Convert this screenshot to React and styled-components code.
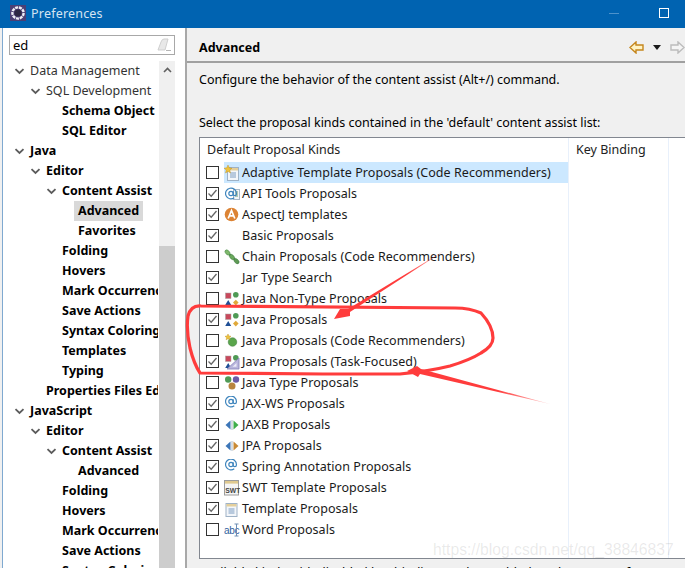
import React from 'react';
import styled, { createGlobalStyle } from 'styled-components';

const GlobalStyle = createGlobalStyle`
  html, body {
    margin: 0;
    padding: 0;
    overflow: hidden;
    background: #f0f0f0;
  }
`

const Window = styled.div`
  position: relative;
  width: 685px;
  height: 568px;
  overflow: hidden;
  display: flex;
  flex-direction: column;
  background: #f0f0f0;
  color: #000;
  font-family: "Noto Sans", "Open Sans", sans-serif;
  font-size: 12.5px;
`

const TitleBar = styled.div`
  height: 28px;
  flex: none;
  box-sizing: border-box;
  display: flex;
  align-items: center;
  background: #0063b1;
  color: #d5e4f2;
  padding: 0 0 2px 10px;
  gap: 5px;
`

const TitleText = styled.span`
  flex: 1;
  font-size: 12.5px;
  letter-spacing: 0.2px;
`

const MinButton = styled.div`
  width: 10px;
  height: 1px;
  background: #4d92cb;
  margin-right: 35px;
`

const MaxButton = styled.div`
  width: 8px;
  height: 8px;
  border: 1px solid #fff;
  margin-right: 16px;
`

const Body = styled.div`
  flex: 1;
  min-height: 0;
  display: flex;
`

const Sidebar = styled.div`
  width: 183px;
  flex: none;
  margin-left: 2px;
  padding-top: 7px;
  box-sizing: border-box;
  background: #fff;
  border-left: 1px solid #7fa9d0;
  display: flex;
  flex-direction: column;
`

const Search = styled.div`
  width: 166px;
  height: 20px;
  margin-left: 6px;
  box-sizing: border-box;
  border: 1px solid #a8a8a8;
  display: flex;
  align-items: center;
  justify-content: space-between;
  padding: 0 2px 0 3px;
  font-size: 13px;
`

const TreeArea = styled.div`
  flex: 1;
  min-height: 0;
  margin-top: 6px;
  display: flex;
`

const Tree = styled.div`
  width: 155px;
  margin-right: 1px;
  overflow: hidden;
  flex: none;
`

const TreeRow = styled.div`
  height: 20px;
  display: flex;
  align-items: center;
  white-space: nowrap;
  padding-left: ${p => 11 + p.$level * 16}px;
`

const Toggle = styled.span`
  width: 16px;
  flex: none;
  display: flex;
  align-items: center;
`

const TreeLabel = styled.span`
  font-weight: ${p => (p.$bold ? 700 : 400)};
  color: ${p => (p.$bold ? '#000' : '#333')};
  height: 20px;
  line-height: 20px;
  padding: 0 4px;
  margin-left: -4px;
  background: ${p => (p.$selected ? '#d9d9d9' : 'transparent')};
`

const Scrollbar = styled.div`
  width: 16px;
  flex: none;
  display: flex;
  flex-direction: column;
  background: #f0f0f0;
`

const ScrollArrow = styled.div`
  height: 17px;
  display: flex;
  align-items: center;
  justify-content: center;
`

const ScrollThumb = styled.div`
  margin-top: 168px;
  flex: 1;
  background: #cdcdcd;
`

const Sash = styled.div`
  width: 2px;
  flex: none;
  background: #a8a8a8;
`

const Main = styled.div`
  flex: 1;
  min-width: 0;
  display: flex;
  flex-direction: column;
`

const Header = styled.div`
  height: 35px;
  flex: none;
  box-sizing: border-box;
  border-bottom: 2px solid #a0a0a0;
  display: flex;
  align-items: center;
  justify-content: space-between;
  padding: 5px 0 0 12px;
`

const Title = styled.h1`
  margin: 0;
  font-size: 12.5px;
  font-weight: 700;
`

const Nav = styled.div`
  display: flex;
  align-items: center;
  gap: 9px;
`

const Paragraph = styled.div`
  height: 20px;
  line-height: 20px;
  white-space: nowrap;
  margin-left: 12px;
  margin-top: ${p => p.$top}px;
  flex: none;
  letter-spacing: -0.02px;
`

const Table = styled.div`
  height: 422px;
  flex: none;
  margin: 4px 0 0 12px;
  box-sizing: border-box;
  border: 1px solid #828790;
  border-right: 0;
  background: #fff;
  display: grid;
  grid-template-columns: 369px 100px 1fr;
`

const Column = styled.div`
  border-right: 1px solid #e8f0fb;
`

const ColumnHead = styled.div`
  height: 24px;
  padding: 2px 0 0 7px;
  box-sizing: border-box;
  line-height: 20px;
  color: #222;
`

const Row = styled.div`
  height: 21px;
  display: flex;
  align-items: center;
  padding-left: 6px;
  white-space: nowrap;
`

const Box = styled.span`
  width: 13px;
  height: 13px;
  box-sizing: border-box;
  border: 1px solid #333;
  background: #fff;
  flex: none;
  display: flex;
  align-items: center;
  justify-content: center;
`

const Cell = styled.div`
  flex: 1;
  height: 21px;
  margin-left: 5px;
  display: flex;
  align-items: center;
  background: ${p => (p.$selected ? '#cce8ff' : 'transparent')};
`

const IconSlot = styled.span`
  width: 16px;
  height: 16px;
  margin-right: 2px;
  flex: none;
  display: flex;
`

const RowLabel = styled.span`
  color: #1a1a1a;
  letter-spacing: 0.05px;
`

const Hint = styled.div`
  margin: 4px 0 0 12px;
  line-height: 20px;
  white-space: nowrap;
`

const Watermark = styled.div`
  position: absolute;
  left: 433px;
  top: 541px;
  font-family: "Liberation Sans", Arial, sans-serif;
  font-size: 15.7px;
  color: rgba(120, 120, 120, 0.16);
  white-space: nowrap;
`

const Annotations = styled.svg`
  position: absolute;
  left: 0;
  top: 0;
  pointer-events: none;
`

const Icon = ({ children }) => (
  <svg width="16" height="16" viewBox="0 0 16 16">{children}</svg>
)

const Chevron = () => (
  <svg width="11" height="7" viewBox="0 0 11 7">
    <path d="M1.5 1.2 L5.5 5 L9.5 1.2" fill="none" stroke="#5c5c5c" strokeWidth="1.8" />
  </svg>
)

const Check = () => (
  <svg width="11" height="11" viewBox="0 0 11 11">
    <path d="M1.5 5.5 L4.2 8.2 L9.5 2" fill="none" stroke="#666" strokeWidth="1.3" />
  </svg>
)

const Eraser = () => (
  <svg width="15" height="14" viewBox="0 0 15 14">
    <path d="M1 12 L4 4 Q5 1 7 1 L11 1 L8 12 Z" fill="#e8e8e8" stroke="#cfcfcf" />
    <path d="M9 12.5 H14" stroke="#b5b5b5" />
  </svg>
)

const Logo = () => (
  <svg width="16" height="16" viewBox="0 0 16 16">
    <rect x="0" y="0" width="16" height="16" fill="#4b3f74" />
    <circle cx="8" cy="8" r="5.6" fill="none" stroke="#eeeef4" strokeWidth="2.4" strokeDasharray="3 0.8" />
    <circle cx="8" cy="8" r="3.6" fill="#2d2742" />
  </svg>
)

const ArrowBack = () => (
  <svg width="15" height="13" viewBox="0 0 15 13">
    <path d="M1 6.5 L7 1 V4 H14 V9 H7 V12 Z" fill="#fff3c4" stroke="#c5861c" strokeWidth="1.4" />
  </svg>
)

const ArrowForward = () => (
  <svg width="15" height="13" viewBox="0 0 15 13">
    <path d="M14 6.5 L8 1 V4 H1 V9 H8 V12 Z" fill="#f5f5f5" stroke="#bcbcbc" strokeWidth="1.4" />
  </svg>
)

const DropDown = () => (
  <svg width="8" height="5" viewBox="0 0 8 5">
    <path d="M0 0 H8 L4 5 Z" fill="#1a1a1a" />
  </svg>
)

const AtMark = ({ y = 0 }) => (
  <svg x="0.5" y={y} width="13" height="13" viewBox="0 0 24 24" fill="none" stroke="#3f85bd" strokeWidth="2.2">
    <circle cx="12" cy="12" r="4" />
    <path d="M16 8v5a3 3 0 0 0 6 0v-1a10 10 0 1 0-4 8" />
  </svg>
)

const Shapes = () => (
  <>
    <rect x="1.5" y="2" width="5.5" height="5.5" fill="#c8495c" stroke="#a8a0a0" strokeWidth="0.5" />
    <circle cx="11.8" cy="3.8" r="2.8" fill="#4f9a55" />
    <path d="M4.2 9 L7.2 14 H1.2 Z" fill="#1f4f96" />
    <path d="M11.8 8.8 L14.6 11.6 L11.8 14.4 L9 11.6 Z" fill="#e0a93a" />
  </>
)

const Doc = ({ dx = 0 }) => (
  <g transform={`translate(${dx} 0)`}>
    <rect x="3.5" y="2.5" width="11" height="13" fill="#f3f6fa" stroke="#9fb2c6" />
    <rect x="4" y="3" width="10" height="2.5" fill="#e4cf9b" />
    <path d="M6 8 H12 M6 10 H12 M6 12 H12" stroke="#7c9cc0" />
  </g>
)

const icons = {
  adaptive: (
    <Icon>
      <Doc />
      <path d="M4 0 L5.2 2.8 L8 3.2 L5.8 5 L6.5 8 L4 6.4 L1.5 8 L2.2 5 L0 3.2 L2.8 2.8 Z" fill="#efc33c" stroke="#b98b1e" strokeWidth="0.4" />
    </Icon>
  ),
  api: (
    <Icon>
      <rect x="9.5" y="3.5" width="6" height="10" fill="#f3f6fa" stroke="#a8b8c8" />
      <path d="M11 6 H14 M11 8 H14 M11 10 H14" stroke="#6f9a6c" />
      <AtMark y={1} />
    </Icon>
  ),
  aspect: (
    <Icon>
      <circle cx="7.5" cy="7.5" r="6.8" fill="#dc8334" />
      <path d="M4.2 11.5 L7.5 3.5 L10.8 11.5 M5.5 8.8 H9.5" fill="none" stroke="#fff" strokeWidth="1.7" />
    </Icon>
  ),
  chain: (
    <Icon>
      <path d="M1.5 1.5 L14.5 14" stroke="#3f7c43" strokeWidth="2" />
      <ellipse cx="3.5" cy="3.5" rx="3" ry="2" transform="rotate(45 3.5 3.5)" fill="#7fb86c" stroke="#4a8a4a" strokeWidth="0.5" />
      <ellipse cx="8" cy="8" rx="3" ry="2" transform="rotate(45 8 8)" fill="#6aa85c" stroke="#3f7c43" strokeWidth="0.5" />
      <ellipse cx="12.5" cy="12.2" rx="3" ry="2" transform="rotate(45 12.5 12.2)" fill="#5f9a55" stroke="#3f7c43" strokeWidth="0.5" />
    </Icon>
  ),
  java: <Icon><Shapes /></Icon>,
  recommend: (
    <Icon>
      <circle cx="8.5" cy="9" r="4.3" fill="#5aa54b" stroke="#3c7a3c" strokeWidth="0.5" />
      <path d="M4 1 L4.9 3 L7 3.3 L5.4 4.7 L5.9 6.8 L4 5.7 L2.1 6.8 L2.6 4.7 L1 3.3 L3.1 3 Z" fill="#efc33c" stroke="#b98b1e" strokeWidth="0.4" />
    </Icon>
  ),
  task: (
    <Icon>
      <Shapes />
      <path d="M15 4 V15 H3 Z" fill="#b9b6dc" stroke="#8582b8" strokeWidth="0.8" />
      <path d="M12.5 9 V12.7 H8.5 Z" fill="#eceaf7" />
    </Icon>
  ),
  type: (
    <Icon>
      <circle cx="4.2" cy="4.5" r="3.2" fill="#4f9a55" />
      <circle cx="12" cy="4.5" r="3.2" fill="#6b5ba8" />
      <circle cx="8" cy="11" r="3.5" fill="#b8853f" />
    </Icon>
  ),
  at: <Icon><AtMark y={-1} /></Icon>,
  jaxb: (
    <Icon>
      <path d="M1.5 8 L6.5 3.5 V12.5 Z" fill="#3d76b8" />
      <path d="M14.5 8 L9.5 3.5 V12.5 Z" fill="#3fae4a" />
      <path d="M8 3 V13" stroke="#9ab" strokeWidth="0.8" />
    </Icon>
  ),
  jpa: (
    <Icon>
      <path d="M1.5 8 L6.5 3.5 V12.5 Z" fill="#3d76b8" />
      <path d="M14.5 8 L9.5 3.5 V12.5 Z" fill="#c98a35" />
      <path d="M8 3 V13" stroke="#9ab" strokeWidth="0.8" />
    </Icon>
  ),
  swt: (
    <Icon>
      <rect x="0.5" y="0.5" width="14" height="14.5" fill="#f5f5f5" stroke="#9c9c9c" />
      <rect x="1" y="1" width="13" height="2.6" fill="#dfc98f" />
      <text x="1.2" y="12.5" fontFamily="Liberation Sans" fontSize="6.8" fontWeight="700" fill="#444">SWT</text>
    </Icon>
  ),
  template: <Icon><Doc dx={-1.5} /></Icon>,
  word: (
    <Icon>
      <text x="0" y="12" fontFamily="Liberation Sans" fontSize="10" fill="#2f5f9e" letterSpacing="-0.3">abc</text>
      <path d="M10.5 2 H14.5 M10.5 14 H14.5 M12.5 2 V14" stroke="#6f8fb5" />
    </Icon>
  ),
}

const tree = [
  { name: 'Data Management', level: 0, open: true },
  { name: 'SQL Development', level: 1, open: true },
  { name: 'Schema Object', level: 2, bold: true },
  { name: 'SQL Editor', level: 2, bold: true },
  { name: 'Java', level: 0, open: true, bold: true },
  { name: 'Editor', level: 1, open: true, bold: true },
  { name: 'Content Assist', level: 2, open: true, bold: true },
  { name: 'Advanced', level: 3, bold: true, selected: true },
  { name: 'Favorites', level: 3, bold: true },
  { name: 'Folding', level: 2, bold: true },
  { name: 'Hovers', level: 2, bold: true },
  { name: 'Mark Occurrences', level: 2, bold: true },
  { name: 'Save Actions', level: 2, bold: true },
  { name: 'Syntax Coloring', level: 2, bold: true },
  { name: 'Templates', level: 2, bold: true },
  { name: 'Typing', level: 2, bold: true },
  { name: 'Properties Files Editor', level: 1, bold: true },
  { name: 'JavaScript', level: 0, open: true, bold: true },
  { name: 'Editor', level: 1, open: true, bold: true },
  { name: 'Content Assist', level: 2, open: true, bold: true },
  { name: 'Advanced', level: 3, bold: true },
  { name: 'Folding', level: 2, bold: true },
  { name: 'Hovers', level: 2, bold: true },
  { name: 'Mark Occurrences', level: 2, bold: true },
  { name: 'Save Actions', level: 2, bold: true },
  { name: 'Syntax Coloring', level: 2, bold: true },
]

const proposals = [
  { name: 'Adaptive Template Proposals (Code Recommenders)', icon: 'adaptive', checked: false, selected: true },
  { name: 'API Tools Proposals', icon: 'api', checked: true },
  { name: 'AspectJ templates', icon: 'aspect', checked: true },
  { name: 'Basic Proposals', checked: true },
  { name: 'Chain Proposals (Code Recommenders)', icon: 'chain', checked: false },
  { name: 'Jar Type Search', checked: true },
  { name: 'Java Non-Type Proposals', icon: 'java', checked: false },
  { name: 'Java Proposals', icon: 'java', checked: true },
  { name: 'Java Proposals (Code Recommenders)', icon: 'recommend', checked: false },
  { name: 'Java Proposals (Task-Focused)', icon: 'task', checked: true },
  { name: 'Java Type Proposals', icon: 'type', checked: false },
  { name: 'JAX-WS Proposals', icon: 'at', checked: true },
  { name: 'JAXB Proposals', icon: 'jaxb', checked: true },
  { name: 'JPA Proposals', icon: 'jpa', checked: true },
  { name: 'Spring Annotation Proposals', icon: 'at', checked: true },
  { name: 'SWT Template Proposals', icon: 'swt', checked: true },
  { name: 'Template Proposals', icon: 'template', checked: true },
  { name: 'Word Proposals', icon: 'word', checked: false },
]

const App = () => (
  <Window>
    <GlobalStyle />
    <TitleBar>
      <Logo />
      <TitleText>Preferences</TitleText>
      <MinButton />
      <MaxButton />
    </TitleBar>
    <Body>
      <Sidebar>
        <Search>
          ed
          <Eraser />
        </Search>
        <TreeArea>
          <Tree>
            {tree.map((item, index) => (
              <TreeRow key={index} $level={item.level}>
                <Toggle>{item.open && <Chevron />}</Toggle>
                <TreeLabel $bold={item.bold} $selected={item.selected}>{item.name}</TreeLabel>
              </TreeRow>
            ))}
          </Tree>
          <Scrollbar>
            <ScrollArrow>
              <svg width="9" height="6" viewBox="0 0 9 6">
                <path d="M1 5 L4.5 1.5 L8 5" fill="none" stroke="#606060" strokeWidth="1.6" />
              </svg>
            </ScrollArrow>
            <ScrollThumb />
          </Scrollbar>
        </TreeArea>
      </Sidebar>
      <Sash />
      <Main>
        <Header>
          <Title>Advanced</Title>
          <Nav>
            <ArrowBack />
            <DropDown />
            <ArrowForward />
          </Nav>
        </Header>
        <Paragraph $top={7}>Configure the behavior of the content assist (Alt+/) command.</Paragraph>
        <Paragraph $top={23}>Select the proposal kinds contained in the 'default' content assist list:</Paragraph>
        <Table>
          <Column>
            <ColumnHead>Default Proposal Kinds</ColumnHead>
            {proposals.map((item) => (
              <Row key={item.name}>
                <Box>{item.checked && <Check />}</Box>
                <Cell $selected={item.selected}>
                  <IconSlot>{icons[item.icon]}</IconSlot>
                  <RowLabel>{item.name}</RowLabel>
                </Cell>
              </Row>
            ))}
          </Column>
          <Column>
            <ColumnHead>Key Binding</ColumnHead>
          </Column>
          <div />
        </Table>
        <Hint>Available kinds with disabled key binding can be enabled on the Keys preference page for a</Hint>
      </Main>
    </Body>
    <Watermark>https://blog.csdn.net/qq_38846837</Watermark>
    <Annotations width="685" height="568" viewBox="0 0 685 568">
      <defs>
        <linearGradient id="fadeOne" gradientUnits="userSpaceOnUse" x1="447" y1="249" x2="345" y2="312">
          <stop offset="0" stopColor="#ff3c3c" stopOpacity="0.25" />
          <stop offset="0.4" stopColor="#ff3c3c" />
        </linearGradient>
        <linearGradient id="fadeTwo" gradientUnits="userSpaceOnUse" x1="550" y1="404" x2="420" y2="372">
          <stop offset="0" stopColor="#ff3c3c" stopOpacity="0.25" />
          <stop offset="0.4" stopColor="#ff3c3c" />
        </linearGradient>
      </defs>
      <path
        d="M201 306 Q191 305 188 316 Q186 330 190 348 Q194 364 200 373 L323 374 L400 374 Q430 371 450 366 Q470 360 481 353 Q493 346 493 338 Q493 326 481 313 Q470 308 455 308 L201 306"
        fill="none"
        stroke="#ff3c3c"
        strokeWidth="3.2"
      />
      <path d="M447 249 L348 309 L340 309 L334 319 L350 316 L350 312 Z" fill="url(#fadeOne)" />
      <path d="M550 404 L421 369 L417 366 L407 371 L418 377 L420 374 Z" fill="url(#fadeTwo)" />
    </Annotations>
  </Window>
)

export default App;
